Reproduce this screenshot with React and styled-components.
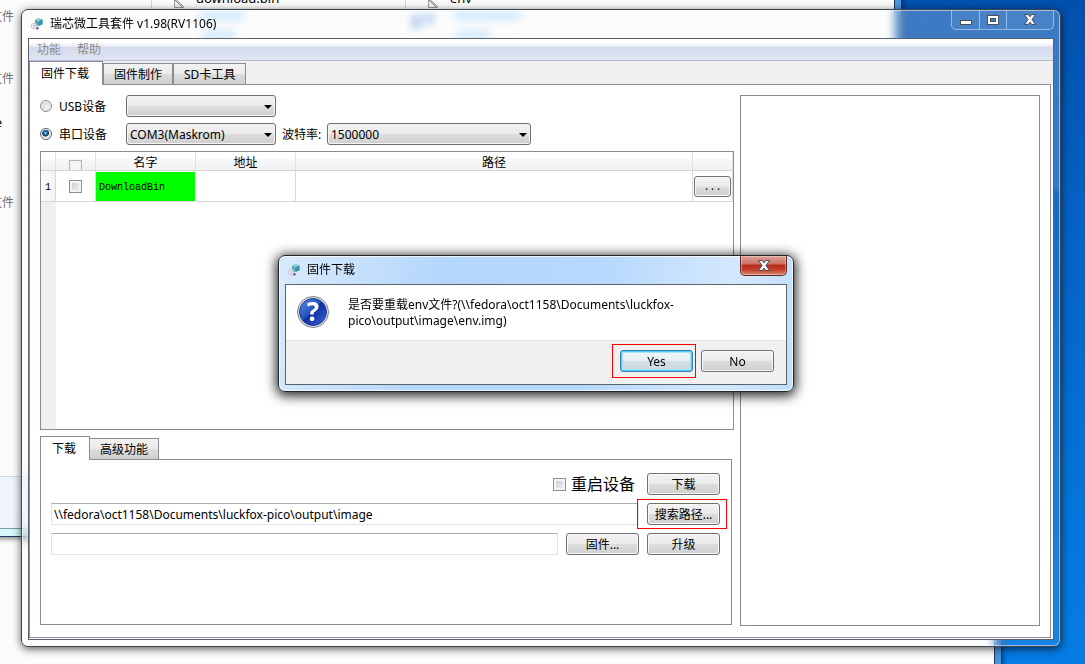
import * as React from 'react';
import styled, { createGlobalStyle, css } from 'styled-components';

const GlobalStyle = createGlobalStyle`
    * {
        box-sizing: border-box;
    }

    body {
        margin: 0;
    }

    body,
    button,
    input,
    select {
        font-family: 'Noto Sans', 'Noto Sans CJK SC', sans-serif;
        font-size: 12px;
        line-height: 16px;
        color: #000;
    }
`;

const Desktop = styled.div`
    position: relative;
    height: 100vh;
    min-height: 600px;
    overflow: hidden;
    background: linear-gradient(185deg, #0250ae 0%, #0462c4 30%, #0478e0 75%, #067ee8 100%);
`;

/* explorer windows lying behind the tool */

const ExplorerWindow = styled.div`
    position: absolute;
    left: -20px;
    border: solid #1a3f6b;
    border-width: 0 1px 1px 0;
    background: #4a94dc;
    box-shadow: 0 1px 6px rgba(0, 0, 0, 0.6);
`;

const ExplorerTop = styled(ExplorerWindow)`
    top: -20px;
    right: 183px;
    height: 557px;
    padding: 0 6px 7px 0;
    background: linear-gradient(90deg, #d5f8fd 60%, #4a94dc 90%);
`;

const ExplorerBottom = styled(ExplorerWindow)`
    top: 60px;
    right: 83px;
    bottom: -20px;
    padding-right: 6px;
`;

const ExplorerBody = styled.div`
    position: relative;
    display: flex;
    flex-direction: column;
    height: 100%;
    background: #fcfcfc;
    border-right: 1px solid #1c3c66;
`;

const ExplorerStatus = styled.div`
    height: 53px;
    margin-top: auto;
    background: #eff3fc;
    border-top: 1px solid #c8d8ec;
    border-bottom: 1px solid #7f9a9e;
`;

const FileEntry = styled.div`
    position: absolute;
    left: ${props => props.$x}px;
    top: 10px;
    display: flex;
    gap: 12px;
    padding-left: 22px;
    border-left: 1px solid #d8d8d8;
    font-size: 13px;
`;

const FileType = styled.div`
    position: absolute;
    right: calc(100% - 34px);
    top: ${props => props.$y}px;
    color: #6f6f6f;
    white-space: nowrap;
`;

const FileName = styled(FileType)`
    right: calc(100% - 22px);
    color: #000;
`;

const FileGhost = styled.div`
    position: absolute;
    left: ${props => props.$x}px;
    top: ${props => props.$y}px;
    width: ${props => props.$w}px;
    height: ${props => props.$h || 6}px;
    background: ${props => (props.$h ? '#8fb4e8' : '#a8d8fa')};
`;

/* window frames */

const frame = css`
    position: absolute;
    display: flex;
    flex-direction: column;
    border-radius: 7px;
`;

const AppWindow = styled.main`
    ${frame}
    top: 9px;
    left: 21px;
    right: 24px;
    bottom: 17px;
    padding: 0 6px 6px;
    border: 1px solid #3c4650;
    background: linear-gradient(rgba(255, 255, 255, 0.24), rgba(255, 255, 255, 0.18) 28%, rgba(255, 255, 255, 0.08) 29%);
    backdrop-filter: blur(4px);
    box-shadow:
        inset 0 0 0 1px rgba(255, 255, 255, 0.5),
        0 2px 8px rgba(0, 0, 0, 0.65);
`;

const DialogWindow = styled.section`
    ${frame}
    top: 255px;
    left: 278px;
    width: 516px;
    padding: 0 6px 6px;
    border: 1px solid #20262e;
    background: linear-gradient(100deg, #d9eafc 0%, #b3d6fb 32%, #b6d8fc 60%, #d4e8fd 85%, #c0defc 100%);
    box-shadow:
        inset 0 0 0 1px rgba(255, 255, 255, 0.75),
        0 2px 12px 2px rgba(0, 0, 0, 0.85);
`;

const TitleBar = styled.header`
    display: flex;
    align-items: flex-start;
    height: 28px;
    flex: none;
`;

const Title = styled.h1`
    display: flex;
    align-items: center;
    gap: 6px;
    flex: 1;
    height: 28px;
    margin: 0;
    padding-left: 2px;
    font-size: 12px;
    font-weight: 400;
`;

const WindowButtons = styled.div`
    display: flex;
    height: 20px;
    border: 1px solid rgba(190, 220, 250, 0.65);
    border-top: 0;
    border-radius: 0 0 5px 5px;
    overflow: hidden;
`;

const WindowButton = styled.button`
    display: flex;
    align-items: center;
    justify-content: center;
    width: ${props => (props.$wide ? 47 : 27)}px;
    height: 19px;
    padding: 0;
    border: 0;
    background: rgba(255, 255, 255, 0.06);

    & + & {
        border-left: 1px solid rgba(190, 220, 250, 0.65);
    }
`;

const DialogClose = styled(WindowButton)`
    height: 20px;
    border: 1px solid #5c2a2a;
    border-top: 0;
    border-radius: 0 0 5px 5px;
    background: linear-gradient(#dca096 0%, #cf7166 42%, #b5281a 48%, #c4452f 75%, #de8a70 100%);
    box-shadow: inset 0 0 0 1px rgba(255, 255, 255, 0.35);
`;

const Client = styled.div`
    display: flex;
    flex-direction: column;
    flex: 1;
    min-height: 0;
    border: 1px solid #5a626c;
    background: #fff;
`;

const MenuBar = styled.nav`
    display: flex;
    flex: none;
    height: 22px;
    padding-left: 8px;
    gap: 16px;
    border-bottom: 1px solid #b4bbd3;
    background: linear-gradient(#fff 0%, #fff 15%, #e6eaf5 36%, #d4daed 38%, #e0e5f3 100%);
`;

const MenuItem = styled.button`
    padding: 0;
    border: 0;
    background: none;
    color: #8c8c8c;
`;

/* tabs */

const TabStrip = styled.div`
    display: flex;
    flex: none;
    align-items: flex-end;
    gap: ${props => props.$gap || 0}px;
    height: 24px;
    background: ${props => props.$fill || 'transparent'};
`;

const Tab = styled.button`
    position: relative;
    height: 22px;
    margin-left: -1px;
    padding: 1px 10px 0;
    border: 1px solid #898c95;
    background: linear-gradient(#f2f2f2 0%, #ebebeb 48%, #dddddd 52%, #cfcfcf 100%);

    ${props =>
        props['aria-selected'] &&
        css`
            z-index: 1;
            height: 24px;
            margin-left: 0;
            padding: 1px 13px 0 11px;
            border-bottom: 0;
            background: #fff;
        `}
`;

const TabPane = styled.div`
    display: flex;
    flex: 1;
    min-height: 0;
    margin-top: -1px;
    border: 1px solid #898c95;
    background: #fff;
`;

const MainPane = styled(TabPane)`
    gap: 6px;
    margin-right: 2px;
    margin-bottom: 1px;
    padding: 10px 10px 11px;
`;

const LeftColumn = styled.div`
    display: flex;
    flex-direction: column;
    flex: 1;
    gap: 6px;
    min-width: 0;
    padding-bottom: 1px;
`;

const LogPanel = styled.div`
    flex: none;
    width: 300px;
    border: 1px solid #898c95;
`;

/* form controls */

const Button = styled.button`
    flex: none;
    width: 73px;
    height: 22px;
    padding: 2px 0 0;
    border: 1px solid ${props => (props.$focus ? '#3c7fb1' : '#707070')};
    border-radius: 3px;
    background: ${props =>
        props.$focus
            ? 'linear-gradient(#f0f5f8 0%, #e6eff3 48%, #d3dfe4 52%, #cbd9df 100%)'
            : 'linear-gradient(#f2f2f2 0%, #ebebeb 48%, #dddddd 52%, #cfcfcf 100%)'};
    box-shadow: ${props =>
        props.$focus ? 'inset 0 0 0 1px #48d0f8, inset 0 0 0 2px #a6e2f6' : 'inset 0 0 0 1px #f8f8f8'};
`;

const BrowseButton = styled(Button)`
    display: block;
    width: 37px;
    height: 21px;
    margin-left: 1px;
    padding-top: 4px;
    font-family: 'Liberation Mono', monospace;
    font-size: 10px;
    line-height: 14px;
`;

const Highlight = styled.div`
    position: relative;
    flex: none;
    height: 22px;

    &::after {
        content: '';
        position: absolute;
        inset: ${props => props.$inset};
        border: 1px solid #f00;
        pointer-events: none;
    }
`;

const ComboBox = styled.div`
    position: relative;
    width: ${props => props.$width}px;

    &::after {
        content: '';
        position: absolute;
        right: 4px;
        top: 10px;
        border: solid transparent;
        border-width: 4px 4px 0;
        border-top-color: #000;
        pointer-events: none;
    }
`;

const Select = styled.select`
    appearance: none;
    display: block;
    width: 100%;
    height: 22px;
    padding: 2px 3px 0;
    border: 1px solid #707070;
    border-radius: 3px;
    background: linear-gradient(#f2f2f2 0%, #ebebeb 48%, #dddddd 52%, #cfcfcf 100%);
    box-shadow: inset 0 0 0 1px #f4f4f4;
`;

const Radio = styled.input`
    appearance: none;
    width: 12px;
    height: 12px;
    margin: 0 0 2px;
    border: 1px solid #8a8d90;
    border-radius: 50%;
    background: radial-gradient(circle at 60% 60%, #f6f6f6, #c4c8cc);
    box-shadow: inset 0 0 0 1px #f0f0f0;

    &:checked {
        border-color: #5c6670;
        background: radial-gradient(circle at 45% 40%, #7fd0f2 0, #1f6fa8 2px, #0b2c4c 3px, #e8ecef 4px);
    }
`;

const Checkbox = styled.input`
    appearance: none;
    flex: none;
    width: 13px;
    height: 13px;
    margin: 0;
    border: 1px solid #8e8f8f;
    background: linear-gradient(135deg, #c2c7d0, #f6f6f6);
    box-shadow: inset 0 0 0 2px #f4f4f4;
`;

const HeaderCheckbox = styled(Checkbox)`
    border-color: #b4b5b5;
    background: #f6f6f6;
`;

const TextBox = styled.input`
    flex: 1;
    min-width: 0;
    height: 22px;
    padding: 1px 2px 0;
    border: 1px solid #e2e3ea;
    border-top-color: #abadb3;
    border-radius: 1px;
    background: #fff;
`;

const DeviceRow = styled.div`
    display: flex;
    align-items: center;
    height: 22px;
`;

const RadioLabel = styled.label`
    display: flex;
    align-items: center;
    gap: 7px;
    width: 86px;
    padding-top: 2px;
`;

const BaudLabel = styled.label`
    width: 51px;
    padding: 2px 0 0 6px;
`;

/* image list */

const ListFrame = styled.div`
    flex: 1;
    min-height: 0;
    border: 1px solid #898c95;
    background: linear-gradient(90deg, #f0f0f0 15px, #fff 15px);
`;

const ImageTable = styled.table`
    width: 100%;
    table-layout: fixed;
    border-collapse: separate;
    border-spacing: 0;

    th,
    td {
        padding: 0;
        font-weight: 400;
    }

    thead th {
        height: 19px;
        padding-top: 3px;
        border-right: 1px solid #dfe1e4;
        border-bottom: 1px solid #d5d5d5;
        background: linear-gradient(#fff 0%, #fff 40%, #f6f7f9 42%, #f1f2f4 100%);
        line-height: 15px;
    }

    tbody th {
        background: linear-gradient(90deg, #fbfbfb, #f3f4f5);
    }

    td,
    tbody th {
        height: 31px;
        border-right: 1px solid #d8d8d8;
        border-bottom: 1px solid #d8d8d8;
    }
`;

const Col = styled.col`
    width: ${props => (props.$width ? `${props.$width}px` : 'auto')};
`;

const CheckSlot = styled.div`
    display: flex;
    justify-content: center;
    align-items: ${props => (props.$clip ? 'flex-start' : 'center')};
    height: ${props => (props.$clip ? 10 : 13)}px;
    margin-top: ${props => (props.$clip ? 5 : 0)}px;
    overflow: hidden;
`;

const RowNumber = styled.th`
    && {
        padding-top: 3px;
        font-family: 'Liberation Mono', monospace;
        font-size: 10px;
    }
`;

const NameCell = styled.td`
    && {
        padding: 2px 0 0 3px;
        border-top: 1px solid #fff;
        border-right-color: #fff;
        background: #0f0;
        background-clip: padding-box;
        font-family: 'Liberation Mono', monospace;
        font-size: 10px;
    }
`;

/* download panel */

const DownloadArea = styled.div`
    display: flex;
    flex: none;
    flex-direction: column;
    height: 189px;
    margin-right: 2px;
`;

const DownloadPane = styled(TabPane)`
    flex-direction: column;
    gap: 8px;
    padding: 13px 11px 0 10px;
`;

const FieldRow = styled.div`
    display: flex;
    align-items: center;
    justify-content: flex-end;
    gap: 8px;
`;

const RestartLabel = styled.label`
    display: flex;
    align-items: center;
    gap: 5px;
    margin-right: 4px;
    font-size: 16px;
    line-height: 20px;
`;

/* message box */

const Message = styled.div`
    display: flex;
    gap: 18px;
    height: 55px;
    padding: 11px;
`;

const MessageText = styled.p`
    margin: 0;
    padding-top: 1px;
    width: 350px;
`;

const DialogActions = styled.div`
    display: flex;
    justify-content: flex-end;
    gap: 8px;
    height: 44px;
    padding: 9px 12px 0;
    border-top: 1px solid #dfdfdf;
    background: #f0f0f0;
`;

const ToolIcon = () => (
    <svg width="14" height="14" viewBox="0 0 14 14" aria-hidden="true">
        <path fill="#4fb0bd" d="M8.500 1l4 1.500v4.700L8.500 9 5 7.200V2.500z" />
        <path fill="#8fd4da" d="M8.500 1l4 1.500-4 1.700L5 2.500z" />
        <path fill="#3e93a2" d="M8.500 4.200l4-1.700v4.700L8.500 9z" />
        <circle cx="4" cy="9" r="2.500" fill="#fff" stroke="#b4bac2" strokeWidth="1.400" strokeDasharray="1.4 .6" />
        <circle cx="4" cy="9" r=".9" fill="#a7b0b8" />
        <path fill="#7a2a9c" d="M6.500 10.500l2-.5v2l-2 .8z" />
    </svg>
);

const FileIcon = () => (
    <svg width="10" height="18" viewBox="0 0 10 18" aria-hidden="true">
        <path d="M.5 0v17.500h9v-1L.5 8z" fill="#f4f4f4" stroke="#9a9a9a" />
        <path d="M.5 9.500l8 7.500" stroke="#777" />
    </svg>
);

const CloseGlyph = () => (
    <svg width="12" height="11" viewBox="0 0 12 11" aria-hidden="true">
        <path
            d="M.5.5h3.700L6 2.800 7.800.5h3.700L8 5.500l3.500 5H7.800L6 8.200l-1.800 2.300H.5L4 5.500z"
            fill="#f8f8f8"
            stroke="#4b4f5c"
        />
    </svg>
);

const QuestionIcon = () => (
    <svg width="33" height="33" viewBox="0 0 33 33" aria-hidden="true">
        <defs>
            <linearGradient id="ball" x1="0" y1="0" x2="1" y2="1">
                <stop offset="0" stopColor="#5f8de0" />
                <stop offset=".45" stopColor="#2450c0" />
                <stop offset=".5" stopColor="#1230a0" />
                <stop offset="1" stopColor="#3a66dc" />
            </linearGradient>
        </defs>
        <circle cx="16" cy="16" r="15.500" fill="#e4e6ea" stroke="#7d828c" />
        <circle cx="16" cy="16" r="13.500" fill="url(#ball)" stroke="#1b3a94" />
        <text
            x="16"
            y="25"
            fill="#fff"
            fontFamily="Open Sans, sans-serif"
            fontSize="26"
            fontWeight="700"
            textAnchor="middle"
        >
            ?
        </text>
    </svg>
);

const ExplorerBackdrop = () => (
    <>
        <ExplorerBottom>
            <ExplorerBody />
        </ExplorerBottom>
        <ExplorerTop>
            <ExplorerBody>
                <FileEntry $x={171}>
                    <FileIcon />
                    download.bin
                </FileEntry>
                <FileEntry $x={425}>
                    <FileIcon />
                    env
                </FileEntry>
                <FileGhost $x={220} $y={33} $w={44} />
                <FileGhost $x={222} $y={52} $w={34} />
                <FileGhost $x={432} $y={35} $w={8} $h={14} />
                <FileGhost $x={444} $y={35} $w={10} $h={8} />
                <FileGhost $x={474} $y={33} $w={66} />
                <FileGhost $x={476} $y={52} $w={34} />
                <FileType $y={29}>文件</FileType>
                <FileType $y={91}>文件</FileType>
                <FileName $y={135}>e</FileName>
                <FileType $y={215}>文件</FileType>
                <ExplorerStatus />
            </ExplorerBody>
        </ExplorerTop>
    </>
);

const DeviceForm = () => (
    <>
        <DeviceRow>
            <RadioLabel>
                <Radio type="radio" name="device" value="usb" />
                USB设备
            </RadioLabel>
            <ComboBox $width={150}>
                <Select aria-label="USB设备" />
            </ComboBox>
        </DeviceRow>
        <DeviceRow>
            <RadioLabel>
                <Radio type="radio" name="device" value="serial" defaultChecked />
                串口设备
            </RadioLabel>
            <ComboBox $width={150}>
                <Select aria-label="串口设备">
                    <option>COM3(Maskrom)</option>
                </Select>
            </ComboBox>
            <BaudLabel htmlFor="baud">波特率:</BaudLabel>
            <ComboBox $width={204}>
                <Select id="baud">
                    <option>1500000</option>
                </Select>
            </ComboBox>
        </DeviceRow>
    </>
);

const ImageList = () => (
    <ListFrame>
        <ImageTable>
            <colgroup>
                <Col $width={15} />
                <Col $width={40} />
                <Col $width={100} />
                <Col $width={100} />
                <Col />
                <Col $width={40} />
            </colgroup>
            <thead>
                <tr>
                    <th />
                    <th>
                        <CheckSlot $clip>
                            <HeaderCheckbox type="checkbox" aria-label="全选" />
                        </CheckSlot>
                    </th>
                    <th>名字</th>
                    <th>地址</th>
                    <th>路径</th>
                    <th />
                </tr>
            </thead>
            <tbody>
                <tr>
                    <RowNumber>1</RowNumber>
                    <td>
                        <CheckSlot>
                            <Checkbox type="checkbox" aria-label="DownloadBin" />
                        </CheckSlot>
                    </td>
                    <NameCell>DownloadBin</NameCell>
                    <td />
                    <td />
                    <td>
                        <BrowseButton>...</BrowseButton>
                    </td>
                </tr>
            </tbody>
        </ImageTable>
    </ListFrame>
);

const DownloadPanel = () => (
    <DownloadArea>
        <TabStrip role="tablist">
            <Tab role="tab" aria-selected>
                下载
            </Tab>
            <Tab role="tab">高级功能</Tab>
        </TabStrip>
        <DownloadPane>
            <FieldRow>
                <RestartLabel>
                    <Checkbox type="checkbox" />
                    重启设备
                </RestartLabel>
                <Button>下载</Button>
            </FieldRow>
            <FieldRow>
                <TextBox
                    aria-label="搜索路径"
                    defaultValue="\\fedora\oct1158\Documents\luckfox-pico\output\image"
                    spellCheck={false}
                />
                <Highlight $inset="-4px -7px -4px -10px">
                    <Button>搜索路径...</Button>
                </Highlight>
            </FieldRow>
            <FieldRow>
                <TextBox aria-label="固件" />
                <Button>固件...</Button>
                <Button>升级</Button>
            </FieldRow>
        </DownloadPane>
    </DownloadArea>
);

const ReloadDialog = () => (
    <DialogWindow role="dialog" aria-labelledby="reload-title">
        <TitleBar>
            <Title as="h2" id="reload-title">
                <ToolIcon />
                固件下载
            </Title>
            <DialogClose $wide aria-label="关闭">
                <CloseGlyph />
            </DialogClose>
        </TitleBar>
        <Client>
            <Message>
                <QuestionIcon />
                <MessageText>
                    {'是否要重载env文件?(\\\\fedora\\oct1158\\Documents\\luckfox-'}
                    <wbr />
                    {'pico\\output\\image\\env.img)'}
                </MessageText>
            </Message>
            <DialogActions>
                <Highlight $inset="-6px -3px -6px -8px">
                    <Button $focus>Yes</Button>
                </Highlight>
                <Button>No</Button>
            </DialogActions>
        </Client>
    </DialogWindow>
);

const App = () => {
    return (
        <Desktop>
            <GlobalStyle />
            <ExplorerBackdrop />

            <AppWindow>
                <TitleBar>
                    <Title>
                        <ToolIcon />
                        瑞芯微工具套件 v1.98(RV1106)
                    </Title>
                    <WindowButtons>
                        <WindowButton aria-label="最小化">
                            <svg width="12" height="11" viewBox="0 0 12 11">
                                <rect x=".5" y="6.500" width="11" height="4" fill="#fff" stroke="#4b4f5c" />
                            </svg>
                        </WindowButton>
                        <WindowButton aria-label="最大化">
                            <svg width="12" height="10" viewBox="0 0 12 10">
                                <rect x=".5" y=".5" width="11" height="9" fill="#fff" stroke="#4b4f5c" />
                                <rect x="3.500" y="3.500" width="5" height="3" fill="#3d7fc4" stroke="#4b4f5c" />
                            </svg>
                        </WindowButton>
                        <WindowButton $wide aria-label="关闭">
                            <CloseGlyph />
                        </WindowButton>
                    </WindowButtons>
                </TitleBar>
                <Client>
                    <MenuBar>
                        <MenuItem>功能</MenuItem>
                        <MenuItem>帮助</MenuItem>
                    </MenuBar>
                    <TabStrip role="tablist" $fill="#f0f0f0" $gap={1}>
                        <Tab role="tab" aria-selected>
                            固件下载
                        </Tab>
                        <Tab role="tab">固件制作</Tab>
                        <Tab role="tab">SD卡工具</Tab>
                    </TabStrip>
                    <MainPane>
                        <LeftColumn>
                            <DeviceForm />
                            <ImageList />
                            <DownloadPanel />
                        </LeftColumn>
                        <LogPanel />
                    </MainPane>
                </Client>
            </AppWindow>

            <ReloadDialog />
        </Desktop>
    );
};

export default App;
